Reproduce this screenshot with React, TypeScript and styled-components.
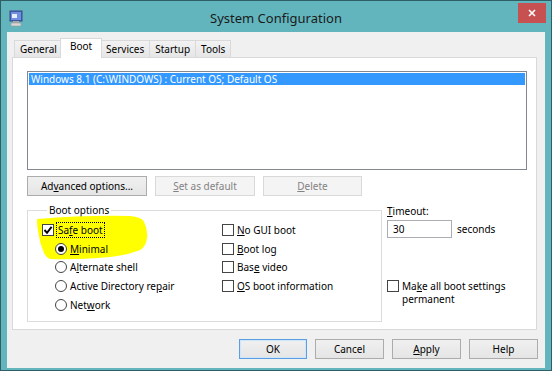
import React from 'react';
import styled, { createGlobalStyle, css } from 'styled-components';

const GlobalStyle = createGlobalStyle`
  html, body {
    margin: 0;
    padding: 0;
    background: #ffffff;
  }
  body {
    font-family: 'Noto Sans', 'DejaVu Sans', sans-serif;
    font-size: 10px;
    color: #000;
  }
`;

const StyledWindow = styled.div`
  width: 552px;
  height: 371px;
  box-sizing: border-box;
  border: 1px solid #2f5f64;
  background: #63b5bd;
  display: flex;
  flex-direction: column;
`;

const StyledTitleBar = styled.div`
  height: 31px;
  flex-shrink: 0;
  display: grid;
  grid-template-columns: 1fr auto 1fr;
  align-items: start;
`;

const StyledAppIcon = styled.div`
  padding: 9px 0 0 8px;
  line-height: 0;
`;

const StyledTitle = styled.div`
  font-size: 13px;
  line-height: 16px;
  padding-top: 9px;
  color: #1a1a1a;
`;

const StyledCloseButton = styled.div`
  justify-self: end;
  margin: 2px 5px 0 0;
  width: 28px;
  height: 20px;
  background: #c75050;
  display: flex;
  align-items: center;
  justify-content: center;
`;

const StyledClient = styled.div`
  flex: 1;
  margin: 0 6px 3px 6px;
  background: #f0f0f0;
  padding: 6px 7px 9px 5px;
  display: flex;
  flex-direction: column;
`;

const StyledTabs = styled.div`
  display: flex;
  align-items: flex-end;
  height: 19px;
  padding-left: 2px;
`;

const StyledTab = styled.div<{ $active?: boolean }>`
  box-sizing: border-box;
  height: 17px;
  padding: 1px 5px 0 5px;
  line-height: 15px;
  border: 1px solid #d9d9d9;
  border-bottom: none;
  margin-right: -1px;
  background: linear-gradient(#f2f2f2, #e6e6e6);
  ${(props) =>
    props.$active &&
    css`
      height: 20px;
      margin: 0 -2px -1px -2px;
      padding: 0 9px;
      background: #ffffff;
      position: relative;
      z-index: 1;
    `}
`;

const StyledPanel = styled.div`
  box-sizing: border-box;
  width: 525px;
  height: 273px;
  border: 1px solid #d9d9d9;
  background: #ffffff;
  padding: 13px 0 0 14px;
  display: flex;
  flex-direction: column;
`;

const StyledListBox = styled.div`
  box-sizing: border-box;
  width: 500px;
  height: 99px;
  border: 1px solid #828790;
  background: #ffffff;
  padding: 1px;
`;

const StyledListItem = styled.div<{ $selected?: boolean }>`
  height: 12px;
  line-height: 12px;
  padding-left: 2px;
  white-space: nowrap;
  ${(props) =>
    props.$selected &&
    css`
      background: #3399ff;
      color: #ffffff;
    `}
`;

const StyledButtonRow = styled.div<{ $top: number; $end?: boolean }>`
  display: flex;
  gap: 8px;
  margin-top: ${(props) => props.$top}px;
  justify-content: ${(props) => (props.$end ? 'flex-end' : 'flex-start')};
`;

const StyledButton = styled.div<{ $width: number; $disabled?: boolean; $default?: boolean }>`
  box-sizing: border-box;
  width: ${(props) => props.$width}px;
  height: 20px;
  border: 1px solid ${(props) => (props.$default ? '#5a9fe2' : '#acacac')};
  background: linear-gradient(#f0f0f0, #e5e5e5);
  display: flex;
  align-items: center;
  justify-content: center;
  line-height: 12px;
  ${(props) =>
    props.$default &&
    css`
      box-shadow: inset 0 0 0 1px #cfe6fa;
    `}
  ${(props) =>
    props.$disabled &&
    css`
      border-color: #d9d9d9;
      background: #f4f4f4;
      color: #838383;
    `}
`;

const StyledKey = styled.span`
  text-decoration: underline;
  text-underline-offset: 1px;
`;

const StyledLower = styled.div`
  display: flex;
  margin-top: 8px;
`;

const StyledGroup = styled.fieldset`
  box-sizing: border-box;
  width: 355px;
  height: 118px;
  margin: 0;
  padding: 5px 0 0 14px;
  border: 1px solid #dcdcdc;
  display: flex;
`;

const StyledLegend = styled.legend`
  padding: 0 2px;
  margin-left: 5px;
  line-height: 12px;
`;

const StyledColumn = styled.div<{ $width?: number }>`
  position: relative;
  z-index: 0;
  width: ${(props) => props.$width ?? 180}px;
  display: flex;
  flex-direction: column;
`;

const StyledHighlight = styled.svg`
  position: absolute;
  left: -7px;
  top: -7px;
  z-index: -1;
`;

const StyledOption = styled.div<{ $indent?: boolean }>`
  height: 18.6px;
  display: flex;
  align-items: center;
  gap: 3px;
  white-space: nowrap;
  padding-left: ${(props) => (props.$indent ? 13 : 0)}px;
`;

const StyledCheckBox = styled.span`
  box-sizing: border-box;
  width: 12px;
  height: 12px;
  flex-shrink: 0;
  border: 1px solid #444;
  background: #ffffff;
  display: flex;
  align-items: center;
  justify-content: center;
`;

const StyledRadio = styled.span<{ $checked?: boolean }>`
  box-sizing: border-box;
  width: 12px;
  height: 12px;
  flex-shrink: 0;
  border: 1px solid #444;
  border-radius: 50%;
  background: #ffffff;
  display: flex;
  align-items: center;
  justify-content: center;
  &::after {
    content: '';
    width: 6px;
    height: 6px;
    border-radius: 50%;
    background: ${(props) => (props.$checked ? '#000' : 'transparent')};
  }
`;

const StyledFocus = styled.span`
  outline: 1px dotted #000;
  outline-offset: 0;
  padding: 1px 1px;
  line-height: 12px;
`;

const StyledSide = styled.div`
  margin-left: 5px;
  display: flex;
  flex-direction: column;
`;

const StyledLabel = styled.div`
  line-height: 13px;
  margin-top: 1px;
`;

const StyledInputRow = styled.div`
  display: flex;
  align-items: center;
  gap: 5px;
  margin-top: 2px;
`;

const StyledInput = styled.div`
  box-sizing: border-box;
  width: 65px;
  height: 18px;
  border: 1px solid #abadb3;
  background: #ffffff;
  padding-left: 5px;
  line-height: 16px;
`;

const StyledPermanent = styled.div`
  display: flex;
  align-items: flex-start;
  gap: 3px;
  margin-top: 42px;
  line-height: 12.5px;
`;

function Check({ checked }: { checked?: boolean }) {
  return (
    <StyledCheckBox>
      {checked && (
        <svg width="10" height="10" viewBox="0 0 10 10">
          <path d="M1.5 5 L4 7.8 L8.6 1.8" fill="none" stroke="#000" strokeWidth="1.9" />
        </svg>
      )}
    </StyledCheckBox>
  );
}

function MonitorIcon() {
  return (
    <svg width="15" height="17" viewBox="0 0 15 17">
      <rect x="1" y="1" width="12" height="10" fill="#4a62b8" stroke="#3b4c8c" />
      <rect x="2" y="2" width="10" height="8" fill="#6f8fe0" />
      <rect x="3" y="4" width="5" height="4" fill="#e8eefc" />
      <rect x="4" y="11" width="6" height="2" fill="#a8a8a8" />
      <rect x="2" y="13" width="10" height="3" rx="1" fill="#d8d8d8" stroke="#9a9a9a" strokeWidth="0.6" />
    </svg>
  );
}

export default function App() {
  return (
    <React.Fragment>
      <GlobalStyle />
      <StyledWindow>
        <StyledTitleBar>
          <StyledAppIcon>
            <MonitorIcon />
          </StyledAppIcon>
          <StyledTitle>System Configuration</StyledTitle>
          <StyledCloseButton>
            <svg width="8" height="8" viewBox="0 0 8 8">
              <path d="M1 1 L7 7 M7 1 L1 7" stroke="#fff" strokeWidth="1.6" />
            </svg>
          </StyledCloseButton>
        </StyledTitleBar>
        <StyledClient>
          <StyledTabs>
            <StyledTab>General</StyledTab>
            <StyledTab $active>Boot</StyledTab>
            <StyledTab>Services</StyledTab>
            <StyledTab>Startup</StyledTab>
            <StyledTab>Tools</StyledTab>
          </StyledTabs>
          <StyledPanel>
            <StyledListBox>
              <StyledListItem $selected>
                Windows 8.1 (C:\WINDOWS) : Current OS; Default OS
              </StyledListItem>
            </StyledListBox>
            <StyledButtonRow $top={6}>
              <StyledButton $width={120}>
                <span>
                  Ad<StyledKey>v</StyledKey>anced options...
                </span>
              </StyledButton>
              <StyledButton $width={100} $disabled>
                <span>
                  <StyledKey>S</StyledKey>et as default
                </span>
              </StyledButton>
              <StyledButton $width={99} $disabled>
                <span>
                  <StyledKey>D</StyledKey>elete
                </span>
              </StyledButton>
            </StyledButtonRow>
            <StyledLower>
              <StyledGroup>
                <StyledLegend>Boot options</StyledLegend>
                <StyledColumn $width={180}>
                  <StyledHighlight width="116" height="48" viewBox="0 0 116 48">
                    <path
                      d="M3 6 Q50 2 95 3 Q106 4 108 8 Q112 16 111 24 Q110 32 105 35 Q92 40 75 42 Q40 45 15 44 Q10 41 9 36 Q6 29 5 22 Q3 14 3 6 Z"
                      fill="#ffff00"
                      stroke="#ffff00"
                      strokeWidth="2"
                      strokeLinejoin="round"
                    />
                  </StyledHighlight>
                  <StyledOption>
                    <Check checked />
                    <StyledFocus>
                      Sa<StyledKey>f</StyledKey>e boot
                    </StyledFocus>
                  </StyledOption>
                  <StyledOption $indent>
                    <StyledRadio $checked />
                    <span>
                      <StyledKey>M</StyledKey>inimal
                    </span>
                  </StyledOption>
                  <StyledOption $indent>
                    <StyledRadio />
                    <span>
                      A<StyledKey>l</StyledKey>ternate shell
                    </span>
                  </StyledOption>
                  <StyledOption $indent>
                    <StyledRadio />
                    <span>
                      Active Directory re<StyledKey>p</StyledKey>air
                    </span>
                  </StyledOption>
                  <StyledOption $indent>
                    <StyledRadio />
                    <span>
                      Net<StyledKey>w</StyledKey>ork
                    </span>
                  </StyledOption>
                </StyledColumn>
                <StyledColumn $width={150}>
                  <StyledOption>
                    <Check />
                    <span>
                      <StyledKey>N</StyledKey>o GUI boot
                    </span>
                  </StyledOption>
                  <StyledOption>
                    <Check />
                    <span>
                      <StyledKey>B</StyledKey>oot log
                    </span>
                  </StyledOption>
                  <StyledOption>
                    <Check />
                    <span>
                      Bas<StyledKey>e</StyledKey> video
                    </span>
                  </StyledOption>
                  <StyledOption>
                    <Check />
                    <span>
                      <StyledKey>O</StyledKey>S boot information
                    </span>
                  </StyledOption>
                </StyledColumn>
              </StyledGroup>
              <StyledSide>
                <StyledLabel>
                  <StyledKey>T</StyledKey>imeout:
                </StyledLabel>
                <StyledInputRow>
                  <StyledInput>30</StyledInput>
                  <span>seconds</span>
                </StyledInputRow>
                <StyledPermanent>
                  <Check />
                  <span>
                    Ma<StyledKey>k</StyledKey>e all boot settings
                    <br />
                    permanent
                  </span>
                </StyledPermanent>
              </StyledSide>
            </StyledLower>
          </StyledPanel>
          <StyledButtonRow $top={9} $end>
            <StyledButton $width={68} $default>
              OK
            </StyledButton>
            <StyledButton $width={69}>Cancel</StyledButton>
            <StyledButton $width={69}>
              <span>
                <StyledKey>A</StyledKey>pply
              </span>
            </StyledButton>
            <StyledButton $width={69}>Help</StyledButton>
          </StyledButtonRow>
        </StyledClient>
      </StyledWindow>
    </React.Fragment>
  );
}
